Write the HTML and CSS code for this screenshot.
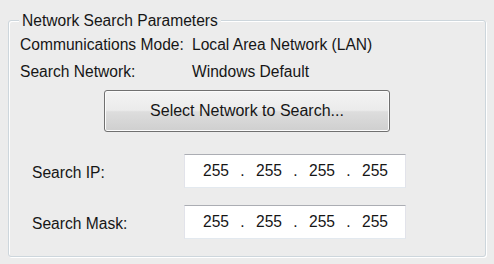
FILE: index.html
```html
<!DOCTYPE html>
<html>
<head>
<meta charset="utf-8">
<link rel="stylesheet" href="styles.css">
</head>
<body>
<div class="group">
  <span class="legend">Network Search Parameters</span>
  <div class="info-row"><span class="info-label">Communications Mode:</span><span>Local Area Network (LAN)</span></div>
  <div class="info-row"><span class="info-label">Search Network:</span><span>Windows Default</span></div>
  <button class="btn">Select Network to Search...</button>
  <div class="ip-row ip-first">
    <span class="ip-label">Search IP:</span>
    <div class="ip-box"><span class="oct">255</span><span class="dot">.</span><span class="oct">255</span><span class="dot">.</span><span class="oct">255</span><span class="dot">.</span><span class="oct">255</span></div>
  </div>
  <div class="ip-row ip-second">
    <span class="ip-label">Search Mask:</span>
    <div class="ip-box"><span class="oct">255</span><span class="dot">.</span><span class="oct">255</span><span class="dot">.</span><span class="oct">255</span><span class="dot">.</span><span class="oct">255</span></div>
  </div>
</div>
</body>
</html>
```
FILE: styles.css
```css
html, body {
  margin: 0;
  padding: 0;
  background: #ececec;
}
body {
  width: 494px;
  height: 264px;
  font-family: "Liberation Sans", Arial, sans-serif;
  font-size: 15.6px;
  line-height: 18px;
  color: #161616;
  padding: 20px 0 0 8px;
  box-sizing: border-box;
}
.group {
  position: relative;
  width: 478px;
  height: 237px;
  box-sizing: border-box;
  border: 1px solid #cdd6dc;
  border-radius: 3px;
  box-shadow: 1px 1px 0 #ffffff, inset 1px 1px 0 #ffffff;
  padding: 15px 0 0 11px;
}
.legend {
  position: absolute;
  top: -9px;
  left: 10px;
  padding: 0 3px 0 3px;
  background: #ececec;
}
.info-row {
  display: flex;
  height: 18px;
  margin-bottom: 9px;
}
.info-label {
  width: 172px;
}
.btn {
  display: block;
  margin: 2px 0 0 84px;
  width: 286px;
  height: 42px;
  border: 1px solid #707070;
  border-radius: 3px;
  background: linear-gradient(#f3f3f3 0%, #ebebeb 48%, #dddddd 52%, #cfcfcf 100%);
  box-shadow: inset 0 0 0 1px #fbfbfb;
  font-family: "Liberation Sans", Arial, sans-serif;
  font-size: 16px;
  color: #161616;
  padding: 0;
}
.ip-row {
  display: flex;
  align-items: center;
}
.ip-first { margin-top: 22px; }
.ip-second { margin-top: 17px; }
.ip-label {
  width: 152px;
  padding-left: 12px;
  padding-top: 4px;
}
.ip-box {
  display: flex;
  align-items: center;
  width: 222px;
  height: 34px;
  box-sizing: border-box;
  background: #fff;
  border: 1px solid #e2e3ea;
  border-top-color: #abadb3;
  border-bottom-color: #e3e9ef;
  padding-left: 18px;
}
.oct {
  width: 26px;
  text-align: left;
}
.dot {
  width: 27px;
  text-align: center;
}
```
